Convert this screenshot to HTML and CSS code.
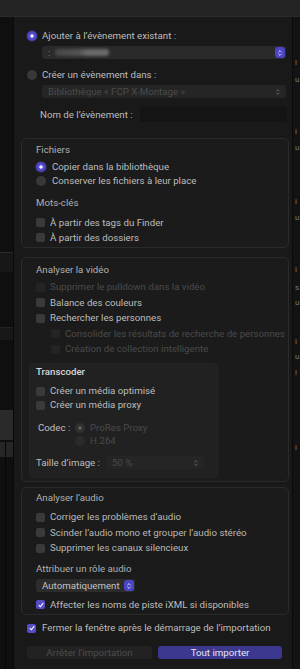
FILE: index.html
```html
<!DOCTYPE html>
<html lang="fr">
<head>
<meta charset="utf-8">
<title>Importer</title>
<link rel="stylesheet" href="styles.css">
</head>
<body>
<div class="top"></div>
<div class="mid">
  <div class="lstrip">
    <div class="ls-dark1"></div>
    <div class="ls-line"></div>
    <div class="ls-band"></div>
    <div class="ls-dark2"></div>
    <div class="ls-band2"></div>
    <div class="ls-dark3"></div>
    <div class="ls-block1"></div>
    <div class="ls-block2"><span class="ls-vl"></span></div>
    <div class="ls-rest"><span class="ls-vl"></span></div>
  </div>

  <div class="main">
    <div class="row gap5"><span class="radio on"></span><span>Ajouter à l’évènement existant :</span></div>
    <div class="popup p-wide mt3">
      <span class="colon">:</span><span class="blurred"></span>
      <span class="stepper blue"><svg viewBox="0 0 10 10" width="8" height="8"><path d="M3 4 L5 2 L7 4 M3 6 L5 8 L7 6" fill="none" stroke="#e4e4ff" stroke-width="1.1"/></svg></span>
    </div>
    <div class="row gap5 mt9"><span class="radio"></span><span>Créer un évènement dans :</span></div>
    <div class="popup p-wide dimpop mt3">
      <span class="ptext">Bibliothèque « FCP X-Montage »</span>
      <span class="stepper"><svg viewBox="0 0 10 10" width="8" height="8"><path d="M3 4 L5 2 L7 4 M3 6 L5 8 L7 6" fill="none" stroke="#6a6a6a" stroke-width="1.1"/></svg></span>
    </div>
    <div class="namerow">
      <span>Nom de l’évènement :</span>
      <div class="field"></div>
    </div>

    <section class="box box1">
      <div class="title">Fichiers</div>
      <div class="row gap6 mt3"><span class="radio on"></span><span>Copier dans la bibliothèque</span></div>
      <div class="row gap6"><span class="radio"></span><span>Conserver les fichiers à leur place</span></div>
      <div class="title mt8">Mots-clés</div>
      <div class="crow mt5"><span class="cb"></span><span>À partir des tags du Finder</span></div>
      <div class="crow"><span class="cb"></span><span>À partir des dossiers</span></div>
    </section>

    <section class="box box2">
      <div class="title">Analyser la vidéo</div>
      <div class="crow tall dim first"><span class="cb dimcb"></span><span>Supprimer le pulldown dans la vidéo</span></div>
      <div class="crow tall"><span class="cb"></span><span>Balance des couleurs</span></div>
      <div class="crow tall"><span class="cb"></span><span>Rechercher les personnes</span></div>
      <div class="crow tall dim indent"><span class="cb dimcb"></span><span>Consolider les résultats de recherche de personnes</span></div>
      <div class="crow tall dim indent"><span class="cb dimcb"></span><span>Création de collection intelligente</span></div>

      <div class="transcoder">
        <div class="ttitle">Transcoder</div>
        <div class="crow mt5"><span class="cb"></span><span>Créer un média optimisé</span></div>
        <div class="crow"><span class="cb"></span><span>Créer un média proxy</span></div>
        <div class="codec mt9">
          <span class="clabel">Codec :</span>
          <span class="radio dimsel"></span><span class="dimtext">ProRes Proxy</span>
        </div>
        <div class="codec">
          <span class="clabel"></span>
          <span class="radio dimoff"></span><span class="dimtext">H.264</span>
        </div>
        <div class="taille mt8">
          <span class="tlabel">Taille d’image :</span>
          <div class="popup p-size dimpop">
            <span class="ptext">50 %</span>
            <span class="stepper"><svg viewBox="0 0 10 10" width="8" height="8"><path d="M3 4 L5 2 L7 4 M3 6 L5 8 L7 6" fill="none" stroke="#6a6a6a" stroke-width="1.1"/></svg></span>
          </div>
        </div>
      </div>
    </section>

    <section class="box box3">
      <div class="title">Analyser l’audio</div>
      <div class="crow tall dim2 first3"><span class="cb"></span><span>Corriger les problèmes d’audio</span></div>
      <div class="crow tall dim2"><span class="cb"></span><span>Scinder l’audio mono et grouper l’audio stéréo</span></div>
      <div class="crow tall dim2"><span class="cb"></span><span>Supprimer les canaux silencieux</span></div>
      <div class="title mt6">Attribuer un rôle audio</div>
      <div class="popup p-auto mt3">
        <span class="ptext">Automatiquement</span>
        <span class="stepper blue"><svg viewBox="0 0 10 10" width="8" height="8"><path d="M3 4 L5 2 L7 4 M3 6 L5 8 L7 6" fill="none" stroke="#e4e4ff" stroke-width="1.1"/></svg></span>
      </div>
      <div class="crow mt5"><span class="cb on"><svg viewBox="0 0 10 10" width="8" height="8"><path d="M2.2 5.2 L4.2 7.2 L7.8 2.6" fill="none" stroke="#fff" stroke-width="1.4"/></svg></span><span>Affecter les noms de piste iXML si disponibles</span></div>
    </section>

    <div class="crow fermer"><span class="cb on"><svg viewBox="0 0 10 10" width="8" height="8"><path d="M2.2 5.2 L4.2 7.2 L7.8 2.6" fill="none" stroke="#fff" stroke-width="1.4"/></svg></span><span>Fermer la fenêtre après le démarrage de l’importation</span></div>

    <div class="buttons">
      <div class="btn btn-stop">Arrêter l’importation</div>
      <div class="btn btn-go">Tout importer</div>
    </div>
  </div>

  <div class="rstrip">
    <div class="g">i</div>
    <div class="g">u</div>
    <div class="g">i</div>
    <div class="g">u</div>
    <div class="g">i</div>
    <div class="g">u</div>
    <div class="g">i</div>
    <div class="g">s</div>
    <div class="g">u</div>
    <div class="g">i</div>
    <div class="g">u</div>
    <div class="g">i</div>
    <div class="g">l</div>
  </div>
</div>
</body>
</html>
```

FILE: styles.css
```css
* { box-sizing: border-box; margin: 0; padding: 0; }
html, body { width: 300px; height: 669px; overflow: hidden; }
body {
  background: #191919;
  font-family: Roboto, "Liberation Sans", sans-serif;
  font-size: 9.7px;
  color: #bdbdbd;
  line-height: 14px;
}

.top { height: 17px; background: #232323; border-bottom: 1px solid #2b2b2b; }
.mid { display: flex; height: 652px; }

/* left strip (other pane) */
.lstrip { width: 14px; flex: none; background: #0f0f0f; border-right: 1px solid #090909; display: flex; flex-direction: column; }
.ls-dark1 { height: 235px; }
.ls-line { height: 1px; background: #2a2a2a; }
.ls-band { height: 19px; background: #171717; }
.ls-dark2 { height: 55px; }
.ls-band2 { height: 13px; background: #181818; border-top: 1px solid #222; }
.ls-dark3 { height: 70px; }
.ls-block1 { height: 30px; background: #2a2a2a; }
.ls-block2 { height: 15px; background: #262626; margin-top: 2px; display: flex; }
.ls-rest { flex: 1; display: flex; }
.ls-vl { width: 1px; margin-left: 5px; background: #060606; }

/* right strip (other pane) */
.rstrip { width: 8px; flex: none; background: #131313; border-left: 1px solid #0a0a0a; display: flex; flex-direction: column; }
.g { height: 10px; line-height: 10px; padding-left: 2px; font-size: 8px; color: #777; white-space: nowrap; }
.g:nth-child(1) { margin-top: 41px; }
.g:nth-child(2) { margin-top: 7px; }
.g:nth-child(3) { margin-top: 42px; }
.g:nth-child(4) { margin-top: 6px; }
.g:nth-child(5) { margin-top: 44px; }
.g:nth-child(6) { margin-top: 6px; }
.g:nth-child(7) { margin-top: 42px; }
.g:nth-child(8) { margin-top: 8px; }
.g:nth-child(9) { margin-top: 5px; }
.g:nth-child(10) { margin-top: 29px; }
.g:nth-child(11) { margin-top: 5px; }
.g:nth-child(12) { margin-top: 6px; }
.g:nth-child(13) { margin-top: 65px; }

/* main panel */
.main { flex: 1; padding: 12px 0 0 13px; display: flex; flex-direction: column; }

.mt3 { margin-top: 3px; }
.mt5 { margin-top: 5px; }
.mt6 { margin-top: 6px; }
.mt8 { margin-top: 8px; }
.mt9 { margin-top: 9px; }

.row { display: flex; align-items: center; height: 14px; white-space: nowrap; }
.gap5 { gap: 5px; }
.gap6 { gap: 6px; }

.radio { width: 10px; height: 10px; border-radius: 50%; background: #383838; flex: none; }
.radio.on { background: radial-gradient(circle, #f0eeff 0 1.4px, #5a50d6 1.9px, #4a41bf 5px); box-shadow: 0 0 1.5px #6b62e0; }
.radio.dimsel { background: radial-gradient(circle, #6a6a6a 0 1.3px, #303030 1.8px); }
.radio.dimoff { background: #2a2a2a; }

.crow { display: flex; align-items: center; gap: 5px; height: 15px; white-space: nowrap; }
.crow.tall { height: 15.5px; }
.cb { width: 9px; height: 9px; border-radius: 2px; background: #3a3a3a; flex: none; display: flex; align-items: center; justify-content: center; }
.cb.dimcb { background: #242424; }
.cb.on { background: #574cc8; }
.dim { color: #4a4a4a; }
.dim2 { color: #b8b8b8; }
.indent { padding-left: 15px; }

/* popups */
.popup { display: flex; align-items: center; height: 13px; background: #2a2a2a; border-radius: 3px; padding-left: 6px; white-space: nowrap; }
.p-wide { margin-left: 15px; width: 244px; }
.dimpop { background: #252525; color: #4b4b4b; }
.stepper { margin-left: auto; width: 10px; height: 11px; border-radius: 3px; display: flex; align-items: center; justify-content: center; margin-right: 1px; }
.stepper.blue { background: #4b45c6; }
.dimpop .stepper { margin-right: 3px; }
.colon { color: #8a8a8a; }
.blurred { width: 54px; height: 7px; margin-left: 5px; border-radius: 3px; background: linear-gradient(90deg, #484848 0%, #535353 45%, #6a6a6a 60%, #6a6a6a 100%); filter: blur(1.5px); }

.namerow { display: flex; align-items: center; height: 15px; margin-top: 9px; padding-left: 13px; padding-right: 5px; white-space: nowrap; }
.field { margin-left: auto; width: 147px; height: 15px; background: #141414; border-radius: 2px; }

/* group boxes */
.box { margin-left: -6px; width: 268px; background: #1b1b1b; border: 1px solid #2a2a2a; border-radius: 5px; padding-left: 14px; display: flex; flex-direction: column; flex: none; }
.title { height: 14px; display: flex; align-items: center; color: #b0b0b0; white-space: nowrap; }
.box1 { height: 110px; margin-top: 16px; padding-top: 4px; }
.box2 { height: 225px; margin-top: 9px; padding-top: 5px; }
.box2 .first { margin-top: 2.5px; }
.box3 { height: 128px; margin-top: 5px; padding-top: 3px; }
.box3 .first3 { margin-top: 4.5px; }

.transcoder { margin-top: 6px; margin-left: -7px; width: 189px; height: 115px; background: #212121; border: 1px solid #252525; border-radius: 4px; padding: 1px 0 0 6px; display: flex; flex-direction: column; }
.ttitle { height: 14px; display: flex; align-items: center; color: #d8d8d8; font-weight: 500; }
.transcoder .crow { height: 14px; }
.codec { display: flex; align-items: center; height: 13px; white-space: nowrap; }
.clabel { width: 39px; padding-left: 2px; flex: none; color: #c0c0c0; }
.dimtext { margin-left: 5px; color: #4a4a4a; }
.taille { display: flex; align-items: center; height: 15px; white-space: nowrap; }
.tlabel { width: 70px; flex: none; }
.p-size { width: 98px; }

.p-auto { width: 99px; background: #2c2c2c; color: #c2c2c2; }

.fermer { margin-top: 6px; gap: 6px; height: 14px; }

.buttons { display: flex; gap: 6px; margin-top: 11px; }
.btn { height: 13px; border-radius: 3px; display: flex; align-items: center; justify-content: center; white-space: nowrap; }
.btn-stop { width: 125px; background: #222; color: #4c4c4c; }
.btn-go { width: 124px; background: #3c388f; color: #e6e6f0; }
```
